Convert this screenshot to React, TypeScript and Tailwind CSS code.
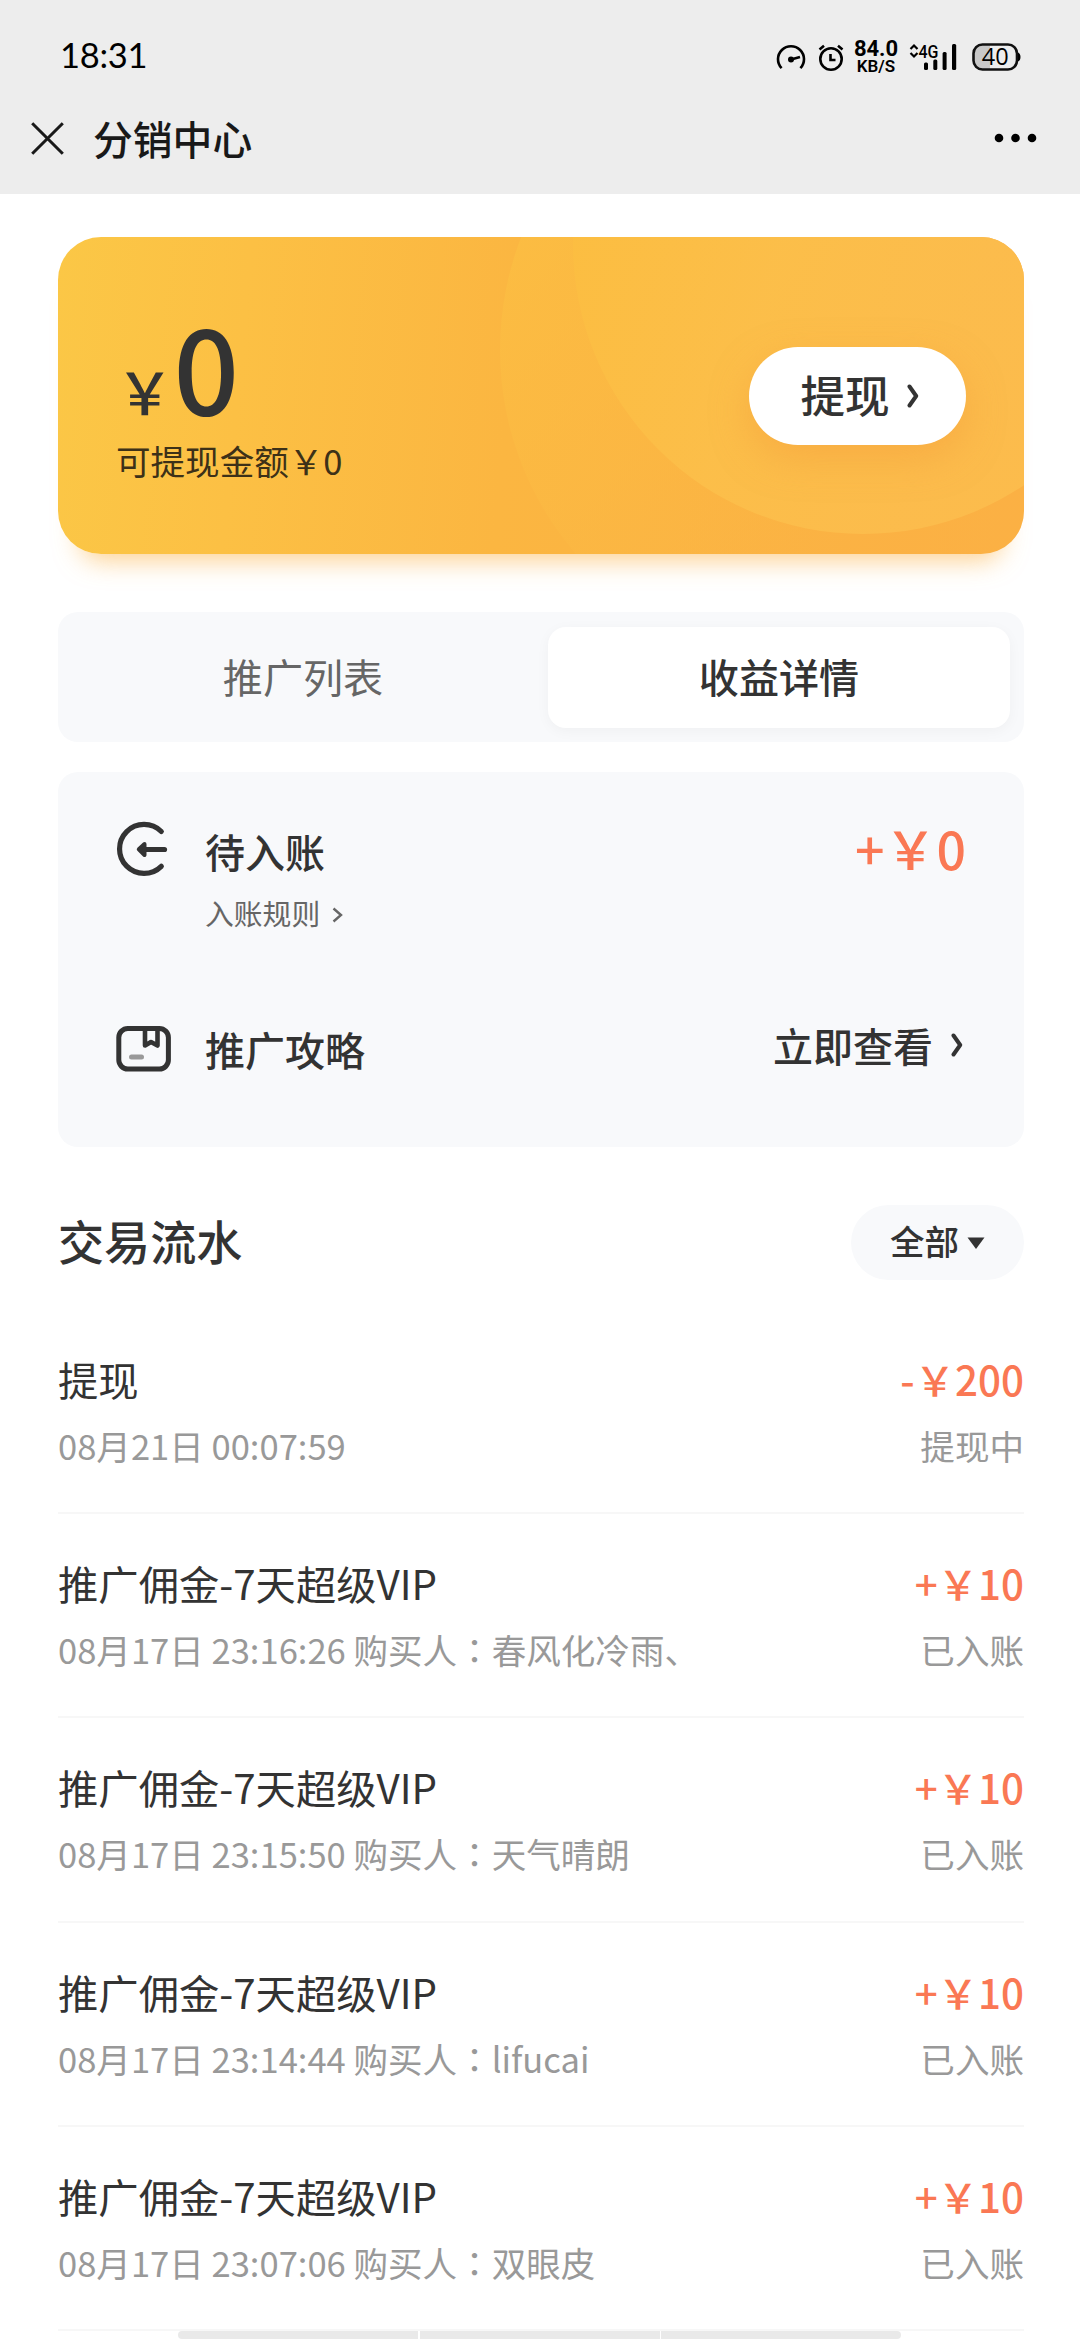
type Transaction = {
  title: string;
  time: string;
  buyer?: string;
  amount: string;
  status: string;
};

const transactions: Transaction[] = [
  { title: "提现", time: "08月21日 00:07:59", amount: "-￥200", status: "提现中" },
  {
    title: "推广佣金-7天超级VIP",
    time: "08月17日 23:16:26",
    buyer: "春风化冷雨、",
    amount: "+￥10",
    status: "已入账",
  },
  {
    title: "推广佣金-7天超级VIP",
    time: "08月17日 23:15:50",
    buyer: "天气晴朗",
    amount: "+￥10",
    status: "已入账",
  },
  {
    title: "推广佣金-7天超级VIP",
    time: "08月17日 23:14:44",
    buyer: "lifucai",
    amount: "+￥10",
    status: "已入账",
  },
  {
    title: "推广佣金-7天超级VIP",
    time: "08月17日 23:07:06",
    buyer: "双眼皮",
    amount: "+￥10",
    status: "已入账",
  },
];

function StatusBar() {
  return (
    <div className="flex h-[113px] items-center justify-between pl-[60px] pr-[59px] text-black">
      <span className="-mt-[3px] font-['Lato',sans-serif] text-[34.5px] leading-none -tracking-[0.3px]">
        18:31
      </span>
      <div className="flex items-center">
        <svg width="30" height="30" viewBox="0 0 30 30" fill="none" stroke="currentColor" strokeWidth="2.6">
          <path d="M5.6 26.2A13 13 0 1 1 24.4 26.2" />
          <path d="M15 17.5L24 15" />
          <circle cx="15" cy="17.5" r="3" fill="currentColor" stroke="none" />
        </svg>
        <svg className="ml-3" width="26" height="28" viewBox="0 0 26 28" fill="none" stroke="currentColor" strokeWidth="2.6">
          <circle cx="13" cy="16" r="10.7" />
          <path d="M12.5 11V17H17.5" />
          <path d="M1.5 6.5L6 2.8M24.5 6.5L20 2.8" />
        </svg>
        <div className="ml-[9px] flex w-[46px] flex-col items-center font-['Roboto',sans-serif]">
          <span className="text-[22px] font-bold leading-[19px]">84.0</span>
          <span className="text-[17px] font-semibold leading-[16px]">KB/S</span>
        </div>
        <svg className="ml-[10px] overflow-visible" width="50" height="28" viewBox="0 0 50 28">
          <path d="M1.5 6L5 2.5L8.5 6M1.5 10L5 13.5L8.5 10" fill="none" stroke="currentColor" strokeWidth="2.2" />
          <text x="9.5" y="14.5" className="font-['Roboto',sans-serif] text-[18px] font-medium" textLength="20" lengthAdjust="spacingAndGlyphs">
            4G
          </text>
          <rect x="15" y="19.5" width="4" height="7.5" rx="1.5" />
          <rect x="24.3" y="16.5" width="4" height="10.5" rx="1.5" />
          <rect x="33.6" y="9" width="4" height="18" rx="1.5" />
          <rect x="43" y="1" width="4.2" height="26" rx="1.5" />
        </svg>
        <svg className="ml-[13px] overflow-visible" width="49" height="28" viewBox="0 0 49 28">
          <path d="M11 2H18V26H11A8.5 8.5 0 0 1 2 17.5V10.5A8.5 8.5 0 0 1 11 2Z" fill="#c8c8c8" />
          <rect x="1.5" y="1.5" width="43.5" height="25" rx="9" fill="none" stroke="#111" strokeWidth="2.6" />
          <path d="M46 9.5Q48.5 10.5 48.5 14T46 18.5Z" />
          <text x="23.3" y="22.3" textAnchor="middle" className="font-['Open_Sans',sans-serif] text-[23.5px]">
            40
          </text>
        </svg>
      </div>
    </div>
  );
}

function TitleBar() {
  return (
    <div className="flex h-[81px] items-start justify-between pl-[31px] pr-[43px]">
      <div className="flex items-center">
        <svg width="33" height="33" viewBox="0 0 33 33" fill="none" stroke="#191919" strokeWidth="3">
          <path d="M1.2 1.2L31.8 31.8M31.8 1.2L1.2 31.8" />
        </svg>
        <h1 className="ml-[29px] text-[39.8px] font-medium leading-[50px] text-[#191919]">分销中心</h1>
      </div>
      <svg className="mt-[20px]" width="43" height="10" viewBox="0 0 43 10">
        <circle cx="5" cy="5" r="4.3" />
        <circle cx="21.5" cy="5" r="4.3" />
        <circle cx="38" cy="5" r="4.3" />
      </svg>
    </div>
  );
}

function Chevron({ className }: { className?: string }) {
  return (
    <svg
      className={className}
      width="12"
      height="24"
      viewBox="0 0 12 24"
      fill="none"
      stroke="currentColor"
      strokeWidth="4"
      strokeLinecap="round"
      strokeLinejoin="round"
    >
      <path d="M2.5 2.5L9.2 12L2.5 21.5" />
    </svg>
  );
}

function BalanceCard() {
  return (
    <section className="relative h-[317px] rounded-[43px] shadow-[0_28px_26px_-22px_rgba(251,176,67,0.6)]">
      <svg className="absolute inset-0 rounded-[43px]" width="966" height="317" viewBox="0 0 966 317">
        <defs>
          <linearGradient id="base" gradientUnits="userSpaceOnUse" x1="0" y1="0" x2="960" y2="90">
            <stop offset="0" stopColor="#fbc746" />
            <stop offset="0.2" stopColor="#fcc044" />
            <stop offset="0.48" stopColor="#fbb641" />
            <stop offset="1" stopColor="#fbaf44" />
          </linearGradient>
          <linearGradient id="ring" gradientUnits="userSpaceOnUse" x1="440" y1="0" x2="800" y2="317">
            <stop offset="0" stopColor="#fcc143" stopOpacity="0.6" />
            <stop offset="1" stopColor="#fbb344" stopOpacity="0.4" />
          </linearGradient>
          <linearGradient id="disc" gradientUnits="userSpaceOnUse" x1="515" y1="0" x2="900" y2="120">
            <stop offset="0" stopColor="#fcbe41" />
            <stop offset="0.5" stopColor="#fcbf4a" />
            <stop offset="1" stopColor="#fcbd4d" />
          </linearGradient>
        </defs>
        <rect width="966" height="317" fill="url(#base)" />
        <circle cx="754" cy="113" r="312" fill="url(#ring)" />
        <circle cx="805" cy="7" r="290" fill="url(#disc)" fillOpacity="0.9" />
      </svg>
      <div className="relative flex h-full items-center justify-between px-[58px] text-[#333]">
        <div className="-mt-[7px]">
          <div className="flex items-baseline font-medium leading-[130px]">
            <span className="text-[57.6px]">￥</span>
            <span className="text-[115.2px]">0</span>
          </div>
          <div className="-mt-[20px] text-[34.56px] leading-[50px] text-[#3d3118]">可提现金额￥0</div>
        </div>
        <button className="flex h-[98px] w-[217px] items-center justify-center rounded-full bg-white pl-[4px] text-[44.6px] font-medium leading-none shadow-[0_14px_36px_rgba(246,160,60,0.5)]">
          <span className="-mt-[2px]">提现</span>
          <Chevron className="ml-[17px]" />
        </button>
      </div>
    </section>
  );
}

function Tabs() {
  return (
    <nav className="mt-[58px] flex h-[130px] rounded-[20px] bg-[#f8f9fb] pb-[14px] pr-[14px] pt-[15px] text-[40.1px]">
      <div className="flex flex-1 items-center justify-center pb-[3px] text-[#666]">推广列表</div>
      <div className="flex w-[462px] items-center justify-center rounded-[18px] bg-white pb-[3px] font-medium text-[#333] shadow-[0_3px_14px_rgba(0,0,0,0.04)]">
        收益详情
      </div>
    </nav>
  );
}

function IncomePanel() {
  return (
    <section className="mt-[30px] h-[375px] rounded-[20px] bg-[#f8f9fb] px-[58px] pt-[49px] text-[#333]">
      <div className="flex h-[198px] items-start justify-between">
        <div className="flex">
          <svg width="56" height="56" viewBox="0 0 56 56" fill="none" stroke="currentColor" strokeWidth="5.2" strokeLinecap="round" strokeLinejoin="round">
            <path d="M45.3 10.5A24.5 24.5 0 1 0 45.3 45.3" />
            <path d="M48.5 28.5H26" />
            <path d="M28.5 23L22.8 28.3L28.5 34Z" fill="currentColor" strokeWidth="4" />
          </svg>
          <div className="ml-[33px]">
            <div className="text-[40px] font-medium leading-[60px]">待入账</div>
            <div className="mt-[10px] flex items-center text-[28.8px] leading-[44px] text-[#666]">
              入账规则
              <svg className="ml-[12px] mt-[4px]" width="12" height="16" viewBox="0 0 12 16" fill="none" stroke="currentColor" strokeWidth="2.4">
                <path d="M1.5 1.5L9 8L1.5 14.5" />
              </svg>
            </div>
          </div>
        </div>
        <div className="-mt-[3px] text-[51.84px] font-medium leading-[60px] text-[#fa7854]">+￥0</div>
      </div>
      <div className="flex items-center justify-between">
        <div className="flex items-center">
          <svg width="56" height="48" viewBox="0 0 56 48" fill="none" stroke="currentColor" strokeWidth="5" strokeLinejoin="round">
            <rect x="2.8" y="3.5" width="49.6" height="40.5" rx="9" />
            <path d="M29 3.5V20.5L35 17L41.5 20.5V3.5" strokeWidth="4.6" />
            <path d="M15.5 32H25.5" stroke="#999" strokeLinecap="round" />
          </svg>
          <span className="ml-[33px] text-[40px] font-medium leading-[60px]">推广攻略</span>
        </div>
        <div className="-mt-[9px] flex items-center text-[40px] font-medium leading-[60px]">
          立即查看
          <Chevron className="ml-[18px] mr-[3px]" />
        </div>
      </div>
    </section>
  );
}

function TransactionRow({ item }: { item: Transaction }) {
  return (
    <li className="flex h-[204.4px] justify-between border-b-2 border-[#f7f7f7] pt-[39px]">
      <div>
        <div className="text-[40.32px] leading-[60px] text-[#333]">{item.title}</div>
        <div className="mt-[10px] text-[34.56px] leading-[52px] text-[#999]">
          {item.time}
          {item.buyer && (
            <>
              {" 购买人"}
              <span lang="zh-TW" className="font-['Noto_Sans_CJK_TC',sans-serif]">
                ：
              </span>
              {item.buyer}
            </>
          )}
        </div>
      </div>
      <div className="text-right">
        <div className="text-[40.32px] font-medium leading-[60px] text-[#fa7854]">{item.amount}</div>
        <div className="mt-[10px] text-[34.56px] leading-[52px] text-[#999]">{item.status}</div>
      </div>
    </li>
  );
}

export default function App() {
  return (
    <div
      lang="zh-CN"
      className="h-[2340px] w-[1080px] overflow-hidden bg-white font-['Noto_Sans_CJK_SC',sans-serif]"
    >
      <header className="h-[194px] bg-[#ededed]">
        <StatusBar />
        <TitleBar />
      </header>
      <main className="pl-[58px] pr-[56px] pt-[43px]">
        <BalanceCard />
        <Tabs />
        <IncomePanel />
        <div className="mt-[58px] flex h-[75px] items-center justify-between text-[#333]">
          <h2 className="-mt-[5px] text-[46.08px] font-medium leading-[60px]">交易流水</h2>
          <button className="flex h-[75px] w-[173px] items-center justify-center rounded-full bg-[#f8f9fb] text-[34.56px] font-medium">
            <span className="-mt-1">全部</span>
            <svg className="ml-[8px]" width="18" height="12" viewBox="0 0 18 12" fill="currentColor">
              <path d="M0.5 0.5H17.5L9 12Z" />
            </svg>
          </button>
        </div>
        <ul className="mt-[29.5px]">
          {transactions.map((item) => (
            <TransactionRow key={item.time} item={item} />
          ))}
        </ul>
        <div className="ml-[120px] flex h-[8px] w-[723px] gap-[1.5px] overflow-hidden rounded-l-[6px] rounded-r-[6px]">
          <div className="flex-1 bg-[#e9e9e9]" />
          <div className="flex-1 bg-[#e9e9e9]" />
          <div className="flex-1 bg-[#e9e9e9]" />
        </div>
      </main>
    </div>
  );
}
